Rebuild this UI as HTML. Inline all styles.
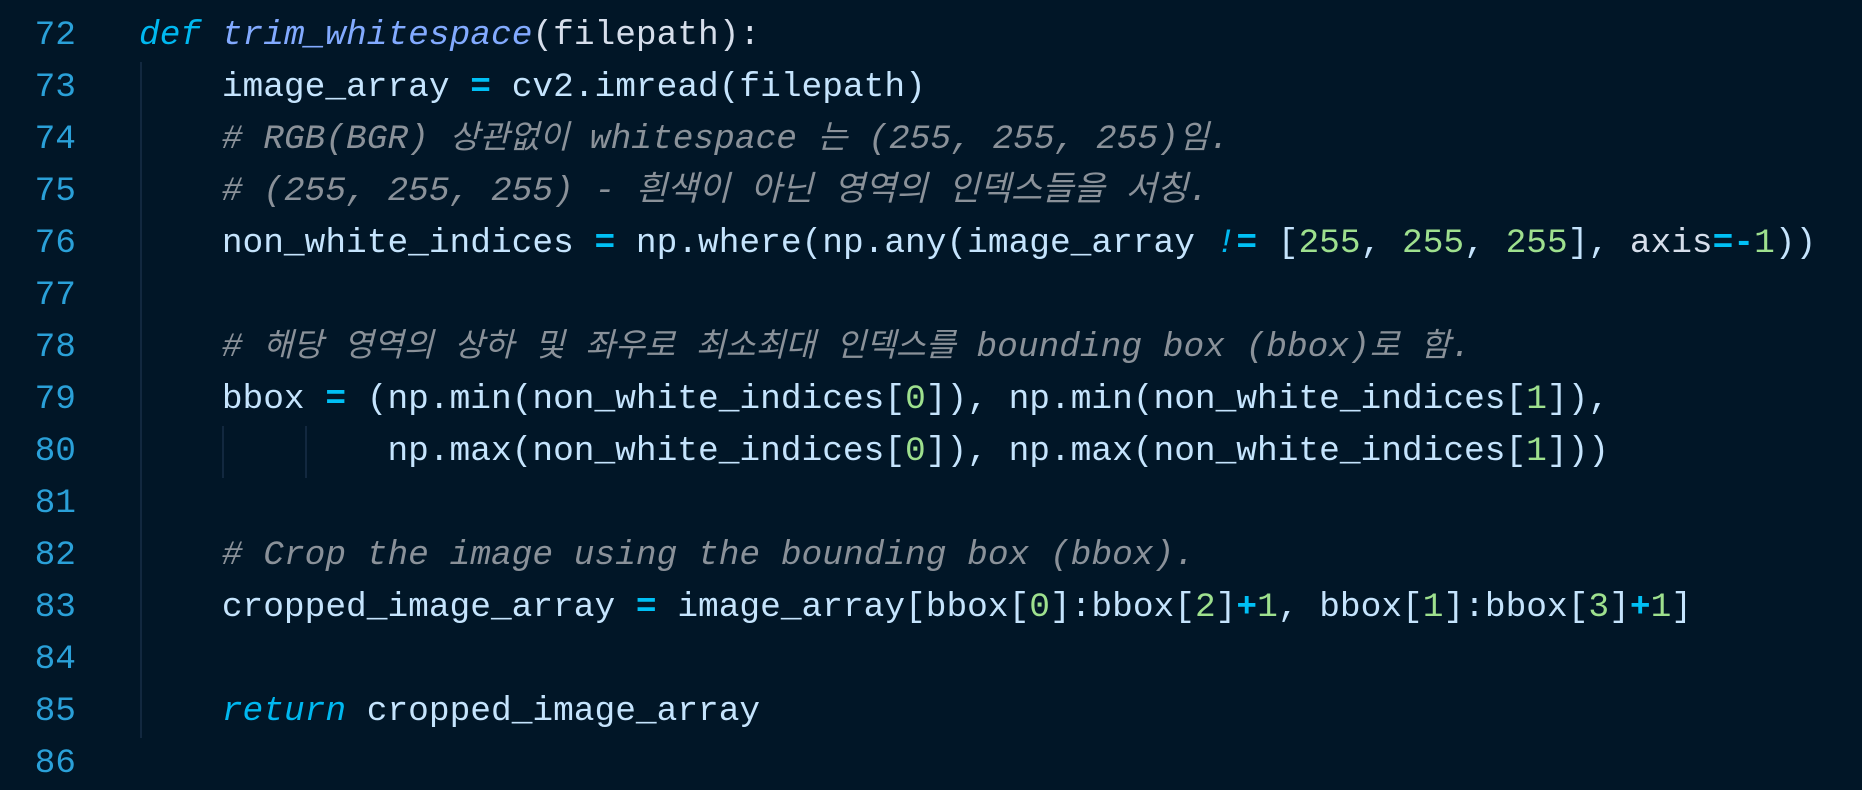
<!DOCTYPE html>
<html><head><meta charset="utf-8"><style>
html,body{margin:0;padding:0;background:#011627;width:1862px;height:752px;overflow:hidden}
.ln{position:absolute;left:0;top:10px;width:76px;text-align:right;font-family:"Liberation Mono","DejaVu Sans Mono",monospace;font-size:34.5px;color:#2aa0d8}
.code{position:absolute;left:139px;top:10px;font-family:"Liberation Mono","Noto Sans CJK KR",monospace;font-size:34.5px;color:#c5e4fd}
.ln div,.code div{height:52px;line-height:52px;white-space:pre;overflow:visible}
.kw{color:#00b8f0;font-style:italic}
.fn{color:#82aaff;font-style:italic}
.c{color:#8a9199;font-style:italic}
.k{font-family:"Noto Sans CJK KR",sans-serif;font-size:32.5px;line-height:1;display:inline-block;vertical-align:baseline}
.k2{font-size:34px}
.op{color:#00c0f5;font-weight:bold}
.n{color:#9ee08e}
.w{color:#d6deeb}
.g{position:absolute;width:2px;background:#12283f}
</style></head><body>
<div class="g" style="left:140px;top:62px;height:468px"></div>
<div class="g" style="left:140px;top:530px;height:208px"></div>
<div class="g" style="left:222px;top:426px;height:52px"></div>
<div class="g" style="left:305px;top:426px;height:52px"></div>
<div class="ln"><div>72</div><div>73</div><div>74</div><div>75</div><div>76</div><div>77</div><div>78</div><div>79</div><div>80</div><div>81</div><div>82</div><div>83</div><div>84</div><div>85</div><div>86</div></div>
<div class="code">
<div><span class="kw">def</span> <span class="fn">trim_whitespace</span><span class="w">(filepath):</span></div>
<div>    image_array <span class="op">=</span> cv2.imread(filepath)</div>
<div>    <span class="c"># RGB(BGR) <span class="k">상관없이</span> whitespace <span class="k">는</span> (255, 255, 255)<span class="k">임</span>.</span></div>
<div>    <span class="c"># (255, 255, 255) - <span class="k k2">흰색이</span> <span class="k k2">아닌</span> <span class="k k2">영역의</span> <span class="k k2">인덱스들을</span> <span class="k k2">서칭</span>.</span></div>
<div>    non_white_indices <span class="op">=</span> np.where(np.any(image_array <span class="kw">!</span><span class="op">=</span> [<span class="n">255</span>, <span class="n">255</span>, <span class="n">255</span>], <span class="w">axis</span><span class="op">=-</span><span class="n">1</span>))</div>
<div> </div>
<div>    <span class="c"># <span class="k">해당</span> <span class="k">영역의</span> <span class="k">상하</span> <span class="k">및</span> <span class="k">좌우로</span> <span class="k">최소최대</span> <span class="k">인덱스를</span> bounding box (bbox)<span class="k">로</span> <span class="k">함</span>.</span></div>
<div>    bbox <span class="op">=</span> (np.min(non_white_indices[<span class="n">0</span>]), np.min(non_white_indices[<span class="n">1</span>]),</div>
<div>            np.max(non_white_indices[<span class="n">0</span>]), np.max(non_white_indices[<span class="n">1</span>]))</div>
<div> </div>
<div>    <span class="c"># Crop the image using the bounding box (bbox).</span></div>
<div>    cropped_image_array <span class="op">=</span> image_array[bbox[<span class="n">0</span>]:bbox[<span class="n">2</span>]<span class="op">+</span><span class="n">1</span>, bbox[<span class="n">1</span>]:bbox[<span class="n">3</span>]<span class="op">+</span><span class="n">1</span>]</div>
<div> </div>
<div>    <span class="kw">return</span> cropped_image_array</div>
</div>
</body></html>
